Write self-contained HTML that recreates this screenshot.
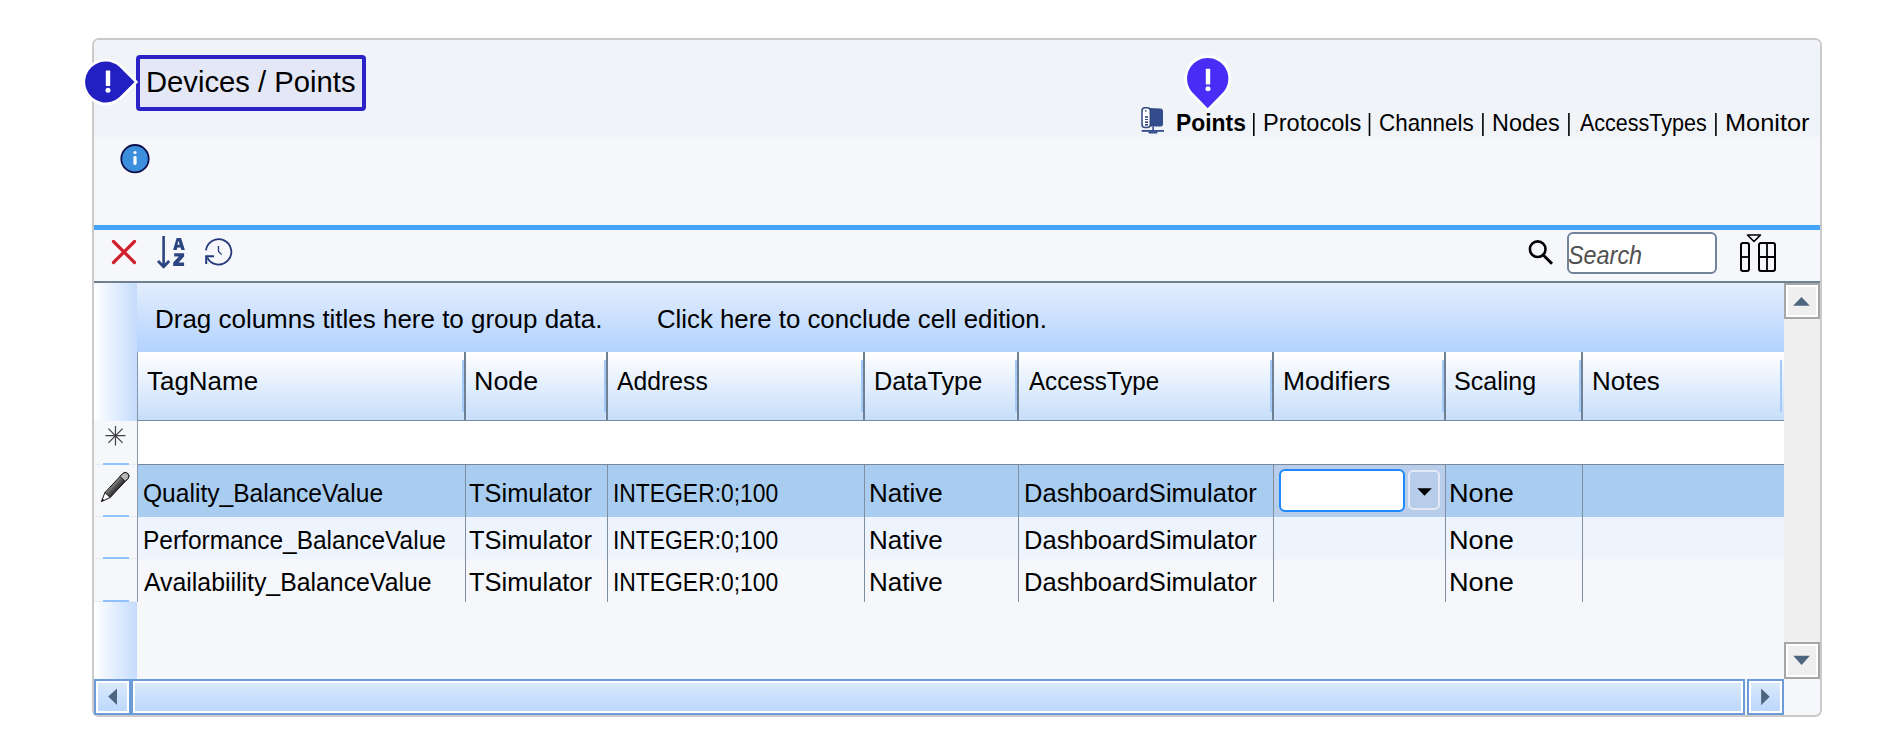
<!DOCTYPE html>
<html><head><meta charset="utf-8"><style>
html,body{margin:0;padding:0;background:#fff;width:1900px;height:755px;overflow:hidden}
body{position:relative;font-family:"Liberation Sans",sans-serif}
.r{position:absolute;box-sizing:content-box}
.t{position:absolute;white-space:nowrap;transform-origin:0 0}
</style></head><body>
<div class="r" style="left:92px;top:38px;width:1726px;height:675px;border:2px solid #cacaca;border-radius:7px;background:#f5f7fb;overflow:hidden"><div class="r" style="left:0;top:0;width:1726px;height:97px;background:#f0f3f8"></div></div>
<div class="r" style="left:136px;top:55px;width:222px;height:48px;border:4px solid #2a22c6;border-radius:4px;background:#e4e7f6"></div>
<div class="t" style="left:145.75px;top:66.90px;font-size:30px;line-height:30px;font-weight:normal;font-style:normal;color:#000;transform:scaleX(0.9741);">Devices / Points</div>
<svg class="r" style="left:78px;top:56px" width="64" height="54" viewBox="78 56 64 54">
<path d="M105.5 58.8 A23.2 23.2 0 0 1 121.5 65.1 L138.2 82 L121.5 98.9 A23.2 23.2 0 1 1 105.5 58.8 Z" fill="#fff"/>
<path d="M105.5 61.5 A20.5 20.5 0 0 1 119.6 67 L134.6 82 L119.6 97 A20.5 20.5 0 1 1 105.5 61.5 Z" fill="#2320c2"/>
<rect x="105.8" y="70.6" width="4.4" height="15.4" rx="0.6" fill="#fff"/><circle cx="108" cy="90.2" r="2.5" fill="#fff"/>
</svg>
<svg class="r" style="left:1180px;top:52px" width="56" height="62" viewBox="1180 52 56 62">
<path d="M1207.7 55.3 A23.3 23.3 0 0 1 1224.5 95 L1207.7 112 L1190.9 95 A23.3 23.3 0 0 1 1207.7 55.3 Z" fill="#fff"/>
<path d="M1207.7 58 A20.6 20.6 0 0 1 1222.5 93 L1207.7 108.2 L1192.9 93 A20.6 20.6 0 0 1 1207.7 58 Z" fill="#4a2cf7"/>
<rect x="1205.8" y="68.8" width="4.4" height="15.6" rx="0.6" fill="#fff"/><circle cx="1208" cy="88.8" r="2.5" fill="#fff"/>
</svg>
<svg class="r" style="left:1138px;top:104px" width="30" height="32" viewBox="1138 104 30 32">
<path d="M1149 108 L1160.5 108.6 Q1163 108.8 1163 111 L1163 124.5 Q1163 126.5 1160.5 126.5 L1149 126.5 Z" fill="#334c8c"/>
<rect x="1142" y="107.8" width="8.3" height="19.6" rx="3" fill="#fff" stroke="#2f4680" stroke-width="1.5"/>
<rect x="1145.2" y="110" width="1.2" height="1.8" fill="#2f4680"/>
<rect x="1145" y="116.2" width="3" height="1.6" fill="#2f4680"/><rect x="1145" y="119" width="3" height="1" fill="#2f4680"/><rect x="1145" y="121.4" width="3" height="1.6" fill="#2f4680"/><rect x="1145" y="124" width="3" height="1.6" fill="#2f4680"/>
<rect x="1152.3" y="126.5" width="1.6" height="4" fill="#334c8c"/>
<rect x="1141.6" y="130" width="22.4" height="1.8" fill="#334c8c"/>
<path d="M1148 131.6 H1158 L1157 133.4 H1149 Z" fill="#334c8c"/>
</svg>
<div class="t" style="left:1175.59px;top:110.88px;font-size:24px;line-height:24px;font-weight:bold;font-style:normal;color:#000;transform:scaleX(0.9529);">Points</div>
<svg class="r" style="left:1240px;top:110px" width="490" height="30" viewBox="1240 110 490 30"><rect x="1253.00" y="113" width="1.6" height="23" fill="#000"/><rect x="1368.70" y="113" width="1.6" height="23" fill="#000"/><rect x="1482.10" y="113" width="1.6" height="23" fill="#000"/><rect x="1568.10" y="113" width="1.6" height="23" fill="#000"/><rect x="1715.10" y="113" width="1.6" height="23" fill="#000"/></svg>
<div class="t" style="left:1262.53px;top:110.88px;font-size:24px;line-height:24px;font-weight:normal;font-style:normal;color:#000;transform:scaleX(0.9835);">Protocols</div>
<div class="t" style="left:1378.67px;top:110.88px;font-size:24px;line-height:24px;font-weight:normal;font-style:normal;color:#000;transform:scaleX(0.9340);">Channels</div>
<div class="t" style="left:1491.75px;top:110.88px;font-size:24px;line-height:24px;font-weight:normal;font-style:normal;color:#000;transform:scaleX(0.9746);">Nodes</div>
<div class="t" style="left:1579.50px;top:110.88px;font-size:24px;line-height:24px;font-weight:normal;font-style:normal;color:#000;transform:scaleX(0.8965);">AccessTypes</div>
<div class="t" style="left:1724.59px;top:110.88px;font-size:24px;line-height:24px;font-weight:normal;font-style:normal;color:#000;transform:scaleX(1.0564);">Monitor</div>
<svg class="r" style="left:118px;top:142px" width="34" height="34" viewBox="118 142 34 34">
<circle cx="135" cy="158.7" r="13.7" fill="#3c8fdc" stroke="#0d0f4a" stroke-width="1.8"/>
<circle cx="135" cy="152.5" r="1.6" fill="#fff"/><rect x="133.4" y="156" width="3.2" height="9" rx="1.4" fill="#fff"/>
</svg>
<div class="r" style="left:94px;top:225px;width:1726px;height:5px;background:#45a4fc;"></div>
<div class="r" style="left:94px;top:281px;width:1726px;height:2px;background:#6f8093;"></div>
<svg class="r" style="left:100px;top:232px" width="140" height="44" viewBox="100 232 140 44">
<path d="M113.5 241.5 L134.5 262.5 M134.5 241.5 L113.5 262.5" stroke="#d0202e" stroke-width="3.2" stroke-linecap="round"/>
<path d="M163.6 236 V266" stroke="#2c4480" stroke-width="2.6"/>
<path d="M158 261 L163.6 266.8 L169.2 261" stroke="#2c4480" stroke-width="2.8" fill="none"/>
<path fill-rule="evenodd" d="M176.6 237.9 H181 L184.9 249.9 H181.3 L180.6 247.4 H177.4 L176.7 249.9 H173.1 Z M178.2 241.6 H178.9 L179.6 244.7 H177.5 Z" fill="#2c4480"/>
<path d="M174.2 253.2 H184.1 V256.5 L178.6 262.6 H184.1 V266.1 H173.2 V262.6 L178.9 256.5 H174.2 Z" fill="#2c4480"/>
<path d="M206 250.4 A12.7 12.7 0 1 1 207.3 257.6" stroke="#24397a" stroke-width="1.8" fill="none"/>
<path d="M214 256.2 H206.2 V264" stroke="#24397a" stroke-width="2" fill="none"/>
<path d="M218.5 246 V251.5 L221.7 254.6" stroke="#24397a" stroke-width="1.3" fill="none"/>
</svg>
<svg class="r" style="left:1524px;top:236px" width="34" height="34" viewBox="1524 236 34 34">
<circle cx="1537.7" cy="249.2" r="7.8" stroke="#000" stroke-width="2.6" fill="none"/>
<path d="M1543.5 255.3 L1552 263.8" stroke="#000" stroke-width="3"/>
</svg>
<div class="r" style="left:1567px;top:232px;width:146px;height:38px;border:2px solid #72839a;border-radius:6px;background:#fff"></div>
<div class="t" style="left:1568.06px;top:242.83px;font-size:25px;line-height:25px;font-weight:normal;font-style:italic;color:#505050;transform:scaleX(0.9351);">Search</div>
<svg class="r" style="left:1734px;top:230px" width="48" height="46" viewBox="1734 230 48 46">
<rect x="1741" y="243" width="8" height="28" rx="2" stroke="#000" stroke-width="2" fill="none"/>
<path d="M1741 257 H1749" stroke="#000" stroke-width="1.8"/>
<rect x="1759" y="243" width="16" height="28" rx="2" stroke="#000" stroke-width="2" fill="none"/>
<path d="M1759 257 H1775 M1767 243 V271" stroke="#000" stroke-width="1.8"/>
<path d="M1747.5 235 H1760.5 L1754 241.5 Z" stroke="#000" stroke-width="1.6" fill="none" stroke-linejoin="round"/>
</svg>
<div class="r" style="left:94px;top:283px;width:43px;height:138px;background:linear-gradient(to right,#ffffff,#c4dcfd);"></div>
<div class="r" style="left:94px;top:602px;width:43px;height:77px;background:linear-gradient(to right,#ffffff,#c4dcfd);"></div>
<div class="r" style="left:137px;top:283px;width:1647px;height:69px;background:linear-gradient(#e4eefd,#b2d2fe);"></div>
<div class="t" style="left:154.60px;top:306.19px;font-size:26px;line-height:26px;font-weight:normal;font-style:normal;color:#000;transform:scaleX(0.9986);">Drag columns titles here to group data.</div>
<div class="t" style="left:657.01px;top:306.19px;font-size:26px;line-height:26px;font-weight:normal;font-style:normal;color:#000;transform:scaleX(0.9918);">Click here to conclude cell edition.</div>
<div class="r" style="left:137px;top:352px;width:1647px;height:69px;background:linear-gradient(#ffffff,#c5ddfb);"></div>
<div class="r" style="left:137px;top:420px;width:1647px;height:1px;background:#7a8a9c;"></div>
<div class="r" style="left:137px;top:352px;width:1px;height:68px;background:#8797a8;"></div>
<div class="r" style="left:464px;top:352px;width:2px;height:68px;background:#6f8093;"></div>
<div class="r" style="left:606px;top:352px;width:2px;height:68px;background:#6f8093;"></div>
<div class="r" style="left:863px;top:352px;width:2px;height:68px;background:#6f8093;"></div>
<div class="r" style="left:1017px;top:352px;width:2px;height:68px;background:#6f8093;"></div>
<div class="r" style="left:1272px;top:352px;width:2px;height:68px;background:#6f8093;"></div>
<div class="r" style="left:1444px;top:352px;width:2px;height:68px;background:#6f8093;"></div>
<div class="r" style="left:1581px;top:352px;width:2px;height:68px;background:#6f8093;"></div>
<div class="r" style="left:462px;top:360px;width:2px;height:52px;background:#a3c9f8;"></div>
<div class="r" style="left:604px;top:360px;width:2px;height:52px;background:#a3c9f8;"></div>
<div class="r" style="left:861px;top:360px;width:2px;height:52px;background:#a3c9f8;"></div>
<div class="r" style="left:1015px;top:360px;width:2px;height:52px;background:#a3c9f8;"></div>
<div class="r" style="left:1270px;top:360px;width:2px;height:52px;background:#a3c9f8;"></div>
<div class="r" style="left:1442px;top:360px;width:2px;height:52px;background:#a3c9f8;"></div>
<div class="r" style="left:1579px;top:360px;width:2px;height:52px;background:#a3c9f8;"></div>
<div class="r" style="left:1780px;top:360px;width:2px;height:52px;background:#a3c9f8;"></div>
<div class="t" style="left:147.20px;top:367.99px;font-size:26px;line-height:26px;font-weight:normal;font-style:normal;color:#000;transform:scaleX(0.9982);">TagName</div>
<div class="t" style="left:474.44px;top:367.99px;font-size:26px;line-height:26px;font-weight:normal;font-style:normal;color:#000;transform:scaleX(1.0322);">Node</div>
<div class="t" style="left:617.20px;top:367.99px;font-size:26px;line-height:26px;font-weight:normal;font-style:normal;color:#000;transform:scaleX(0.9516);">Address</div>
<div class="t" style="left:873.96px;top:367.99px;font-size:26px;line-height:26px;font-weight:normal;font-style:normal;color:#000;transform:scaleX(0.9722);">DataType</div>
<div class="t" style="left:1029.30px;top:367.99px;font-size:26px;line-height:26px;font-weight:normal;font-style:normal;color:#000;transform:scaleX(0.9281);">AccessType</div>
<div class="t" style="left:1282.97px;top:367.99px;font-size:26px;line-height:26px;font-weight:normal;font-style:normal;color:#000;transform:scaleX(1.0175);">Modifiers</div>
<div class="t" style="left:1454.07px;top:367.99px;font-size:26px;line-height:26px;font-weight:normal;font-style:normal;color:#000;transform:scaleX(0.9646);">Scaling</div>
<div class="t" style="left:1592.20px;top:367.99px;font-size:26px;line-height:26px;font-weight:normal;font-style:normal;color:#000;transform:scaleX(0.9985);">Notes</div>
<div class="r" style="left:137px;top:421px;width:1647px;height:43px;background:#ffffff;"></div>
<div class="r" style="left:137px;top:464px;width:1647px;height:1px;background:#7a8a9c;"></div>
<div class="r" style="left:137px;top:465px;width:1647px;height:52px;background:#a9cdf0;"></div>
<div class="r" style="left:137px;top:517px;width:1647px;height:42px;background:#eef4fd;"></div>
<div class="r" style="left:137px;top:559px;width:1647px;height:43px;background:#f5f7fb;"></div>
<div class="r" style="left:465px;top:465px;width:1px;height:137px;background:#7f8fa0;"></div>
<div class="r" style="left:607px;top:465px;width:1px;height:137px;background:#7f8fa0;"></div>
<div class="r" style="left:864px;top:465px;width:1px;height:137px;background:#7f8fa0;"></div>
<div class="r" style="left:1018px;top:465px;width:1px;height:137px;background:#7f8fa0;"></div>
<div class="r" style="left:1273px;top:465px;width:1px;height:137px;background:#7f8fa0;"></div>
<div class="r" style="left:1445px;top:465px;width:1px;height:137px;background:#7f8fa0;"></div>
<div class="r" style="left:1582px;top:465px;width:1px;height:137px;background:#7f8fa0;"></div>
<div class="r" style="left:137px;top:421px;width:1px;height:181px;background:#8797a8;"></div>
<div class="r" style="left:95px;top:464px;width:41px;height:1px;background:#e6ebf2;"></div>
<div class="r" style="left:103px;top:463px;width:26px;height:2px;background:#91c1ff;"></div>
<div class="r" style="left:95px;top:516px;width:41px;height:1px;background:#e6ebf2;"></div>
<div class="r" style="left:103px;top:515px;width:26px;height:2px;background:#91c1ff;"></div>
<div class="r" style="left:95px;top:558px;width:41px;height:1px;background:#e6ebf2;"></div>
<div class="r" style="left:103px;top:557px;width:26px;height:2px;background:#91c1ff;"></div>
<div class="r" style="left:95px;top:601px;width:41px;height:1px;background:#e6ebf2;"></div>
<div class="r" style="left:103px;top:600px;width:26px;height:2px;background:#91c1ff;"></div>
<svg class="r" style="left:100px;top:420px" width="32" height="32" viewBox="100 420 32 32">
<path d="M115.5 426 V445.5 M105.5 435.7 H125.5 M108.4 428.6 L122.6 442.8 M122.6 428.6 L108.4 442.8" stroke="#404040" stroke-width="1.2"/>
</svg>
<svg class="r" style="left:96px;top:466px" width="40" height="40" viewBox="96 466 40 40">
<defs><linearGradient id="pg" gradientUnits="userSpaceOnUse" x1="112.45" y1="484.54" x2="117.70" y2="489.47"><stop offset="0" stop-color="#8c8c8c"/><stop offset="0.45" stop-color="#555"/><stop offset="1" stop-color="#2e2e2e"/></linearGradient></defs>
<path d="M104.93 492.57 L122.71 473.60 A3.6 3.6 0 0 1 127.96 478.52 L110.18 497.49 Z" fill="url(#pg)" stroke="#111" stroke-width="1"/>
<path d="M119.97 476.52 L122.71 473.60 A3.6 3.6 0 0 1 127.96 478.52 L125.22 481.44 Z" fill="#b8b8b8" stroke="#111" stroke-width="1"/>
<path d="M104.93 492.57 L110.18 497.49 L101.40 501.60 Z" fill="#fff" stroke="#111" stroke-width="1" stroke-linejoin="round"/>
<path d="M101.40 501.60 L104.33 500.23 L102.58 498.59 Z" fill="#111"/>
</svg>
<div class="t" style="left:143.05px;top:479.59px;font-size:26px;line-height:26px;font-weight:normal;font-style:normal;color:#000;transform:scaleX(0.9456);">Quality_BalanceValue</div>
<div class="t" style="left:469.42px;top:479.59px;font-size:26px;line-height:26px;font-weight:normal;font-style:normal;color:#000;transform:scaleX(0.9782);">TSimulator</div>
<div class="t" style="left:612.64px;top:479.59px;font-size:26px;line-height:26px;font-weight:normal;font-style:normal;color:#000;transform:scaleX(0.8795);">INTEGER:0;100</div>
<div class="t" style="left:869.00px;top:479.59px;font-size:26px;line-height:26px;font-weight:normal;font-style:normal;color:#000;transform:scaleX(1.0014);">Native</div>
<div class="t" style="left:1024.04px;top:479.59px;font-size:26px;line-height:26px;font-weight:normal;font-style:normal;color:#000;transform:scaleX(0.9817);">DashboardSimulator</div>
<div class="t" style="left:1449.41px;top:479.59px;font-size:26px;line-height:26px;font-weight:normal;font-style:normal;color:#000;transform:scaleX(1.0441);">None</div>
<div class="t" style="left:142.52px;top:526.99px;font-size:26px;line-height:26px;font-weight:normal;font-style:normal;color:#000;transform:scaleX(0.9411);">Performance_BalanceValue</div>
<div class="t" style="left:469.42px;top:526.99px;font-size:26px;line-height:26px;font-weight:normal;font-style:normal;color:#000;transform:scaleX(0.9782);">TSimulator</div>
<div class="t" style="left:612.64px;top:526.99px;font-size:26px;line-height:26px;font-weight:normal;font-style:normal;color:#000;transform:scaleX(0.8795);">INTEGER:0;100</div>
<div class="t" style="left:869.00px;top:526.99px;font-size:26px;line-height:26px;font-weight:normal;font-style:normal;color:#000;transform:scaleX(1.0014);">Native</div>
<div class="t" style="left:1024.04px;top:526.99px;font-size:26px;line-height:26px;font-weight:normal;font-style:normal;color:#000;transform:scaleX(0.9817);">DashboardSimulator</div>
<div class="t" style="left:1449.41px;top:526.99px;font-size:26px;line-height:26px;font-weight:normal;font-style:normal;color:#000;transform:scaleX(1.0441);">None</div>
<div class="t" style="left:143.70px;top:568.59px;font-size:26px;line-height:26px;font-weight:normal;font-style:normal;color:#000;transform:scaleX(0.9550);">Availabiility_BalanceValue</div>
<div class="t" style="left:469.42px;top:568.59px;font-size:26px;line-height:26px;font-weight:normal;font-style:normal;color:#000;transform:scaleX(0.9782);">TSimulator</div>
<div class="t" style="left:612.64px;top:568.59px;font-size:26px;line-height:26px;font-weight:normal;font-style:normal;color:#000;transform:scaleX(0.8795);">INTEGER:0;100</div>
<div class="t" style="left:869.00px;top:568.59px;font-size:26px;line-height:26px;font-weight:normal;font-style:normal;color:#000;transform:scaleX(1.0014);">Native</div>
<div class="t" style="left:1024.04px;top:568.59px;font-size:26px;line-height:26px;font-weight:normal;font-style:normal;color:#000;transform:scaleX(0.9817);">DashboardSimulator</div>
<div class="t" style="left:1449.41px;top:568.59px;font-size:26px;line-height:26px;font-weight:normal;font-style:normal;color:#000;transform:scaleX(1.0441);">None</div>
<div class="r" style="left:1274px;top:465px;width:171px;height:52px;background:#b8cdea;"></div>
<div class="r" style="left:1279px;top:469px;width:122px;height:39px;border:2px solid #1e88ff;border-radius:6px;background:#fff"></div>
<div class="r" style="left:1408px;top:470px;width:28px;height:36px;border:2px solid #e3eaf5;border-radius:5px;background:#b8cdea"></div>
<svg class="r" style="left:1410px;top:480px" width="30" height="22" viewBox="1410 480 30 22">
<path d="M1417.3 488.2 H1431.8 L1424.5 495.8 Z" fill="#000"/></svg>
<div class="r" style="left:1784px;top:283px;width:36px;height:396px;background:#efefef;"></div>
<div class="r" style="left:1784px;top:283px;width:32px;height:32px;border:2px solid #a6a6a6;background:#fff"><div class="r" style="left:2px;top:2px;width:28px;height:28px;background:#efefef"></div></div>
<div class="r" style="left:1784px;top:642px;width:32px;height:33px;border:2px solid #a6a6a6;background:#fff"><div class="r" style="left:2px;top:2px;width:28px;height:29px;background:#efefef"></div></div>
<svg class="r" style="left:1784px;top:283px" width="36" height="396" viewBox="1784 283 36 396">
<path d="M1793.1 305.8 H1809.8 L1801.5 297 Z" fill="#4e6580"/>
<path d="M1793.3 655.8 H1809.9 L1801.6 665.1 Z" fill="#4e6580"/>
</svg>
<div class="r" style="left:94px;top:679px;width:33px;height:32px;border:2px solid #6b9bd8;background:#fff"><div class="r" style="left:2px;top:2px;width:29px;height:28px;background:linear-gradient(#dae9fd,#bcd8fb)"></div></div>
<div class="r" style="left:131px;top:679px;width:1610px;height:32px;border:2px solid #6b9bd8;background:#fff"><div class="r" style="left:2px;top:2px;width:1606px;height:28px;background:linear-gradient(#dae9fd,#bcd8fb)"></div></div>
<div class="r" style="left:1747px;top:679px;width:33px;height:32px;border:2px solid #6b9bd8;background:#fff"><div class="r" style="left:2px;top:2px;width:29px;height:28px;background:linear-gradient(#dae9fd,#bcd8fb)"></div></div>
<svg class="r" style="left:94px;top:679px" width="1726" height="36" viewBox="94 679 1726 36">
<path d="M108.2 696.5 L117 688.4 V705 Z" fill="#4e6580"/>
<path d="M1769.7 696.8 L1761.1 688.5 V705.2 Z" fill="#4e6580"/>
</svg>
</body></html>
